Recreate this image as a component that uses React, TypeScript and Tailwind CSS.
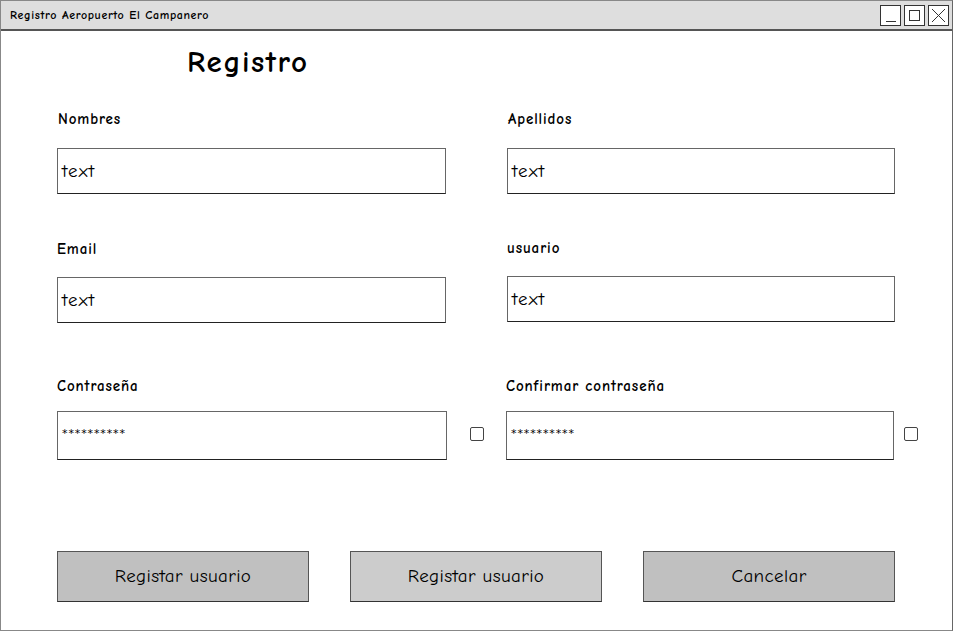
const font = "font-['Comic_Sans_MS','Comic_Neue',cursive]";

function Field({ label, value, mask, top, labelGap, width }: { label: string; value: string; mask?: boolean; top: string; labelGap: string; width: string }) {
  return (
    <div className={`flex flex-col ${width} ${top}`}>
      <div className={`h-[18px] text-[15px] font-bold leading-[18px] tracking-[0.06em] text-black ${labelGap}`}>{label}</div>
      <div
        className={`flex items-center border border-[#666] border-b-[#222] bg-white px-[4px] ${mask ? "h-[49px] pb-[2px] font-['DejaVu_Sans',sans-serif] text-[11px] tracking-[0.08em]" : "h-[46px] text-[19px] tracking-[0.06em]"} text-black`}
      >
        {value}
      </div>
    </div>
  );
}

function Checkbox() {
  return <div className="h-[14px] w-[14px] rounded-[2px] border border-[#444] bg-white" />;
}

export default function App() {
  return (
    <div className={`h-[632px] w-[954px] bg-white ${font}`}>
      <div className="flex h-[631px] w-[953px] flex-col border border-[#888] border-r-[#666]">
        <div className="flex h-[30px] items-center justify-between border-b-2 border-[#555] bg-[#dedede] pl-[9px] pr-[3px]">
          <span className="text-[12px] font-bold tracking-[0.05em] text-black">Registro Aeropuerto El Campanero</span>
          <div className="flex gap-[3px]">
            <div className="flex h-[21px] w-[21px] items-end justify-center border border-[#333] bg-white pb-[3px]">
              <div className="h-[1px] w-[10px] bg-[#333]" />
            </div>
            <div className="flex h-[21px] w-[21px] items-center justify-center border border-[#333] bg-white">
              <div className="h-[11px] w-[11px] border border-[#333]" />
            </div>
            <div className="flex h-[21px] w-[21px] items-center justify-center border border-[#333] bg-white">
              <svg width="15" height="15" viewBox="0 0 15 15" stroke="#333" strokeWidth="1">
                <path d="M1 1L14 14M14 1L1 14" />
              </svg>
            </div>
          </div>
        </div>

        <div className="flex flex-1 flex-col pl-[56px]">
          <div className="mt-[13px] pl-[130px] text-[31px] font-bold leading-[36px] tracking-[0.05em] text-black">Registro</div>

          <div className="mt-[30px] flex gap-[61px]">
            <Field label="Nombres" value="text" top="" labelGap="mb-[20px] pl-[1px]" width="w-[389px]" />
            <Field label="Apellidos" value="text" top="" labelGap="mb-[20px] pl-[1px]" width="w-[388px]" />
          </div>

          <div className="mt-[46px] flex gap-[61px]">
            <Field label="Email" value="text" top="" labelGap="mb-[19px]" width="w-[389px]" />
            <Field label="usuario" value="text" top="mt-[-1px]" labelGap="mb-[19px]" width="w-[388px]" />
          </div>

          <div className="mt-[54px] flex items-start">
            <Field label="Contraseña" value="**********" mask top="" labelGap="mb-[16px]" width="w-[390px]" />
            <div className="flex w-[59px] justify-center pt-[50px] pl-[1px]">
              <Checkbox />
            </div>
            <Field label="Confirmar contraseña" value="**********" mask top="" labelGap="mb-[16px]" width="w-[388px]" />
            <div className="pl-[10px] pt-[50px]">
              <Checkbox />
            </div>
          </div>

          <div className="mt-[91px] flex gap-[41px]">
            <button className="h-[51px] w-[252px] border border-[#555] border-b-[#333] bg-[#c0c0c0] text-[19px] tracking-[0.02em] text-black">Registar usuario</button>
            <button className="h-[51px] w-[252px] border border-[#555] border-b-[#333] bg-[#cccccc] text-[19px] tracking-[0.02em] text-black">Registar usuario</button>
            <button className="h-[51px] w-[252px] border border-[#555] border-b-[#333] bg-[#c0c0c0] text-[19px] tracking-[0.02em] text-black">Cancelar</button>
          </div>
        </div>
      </div>
    </div>
  );
}
